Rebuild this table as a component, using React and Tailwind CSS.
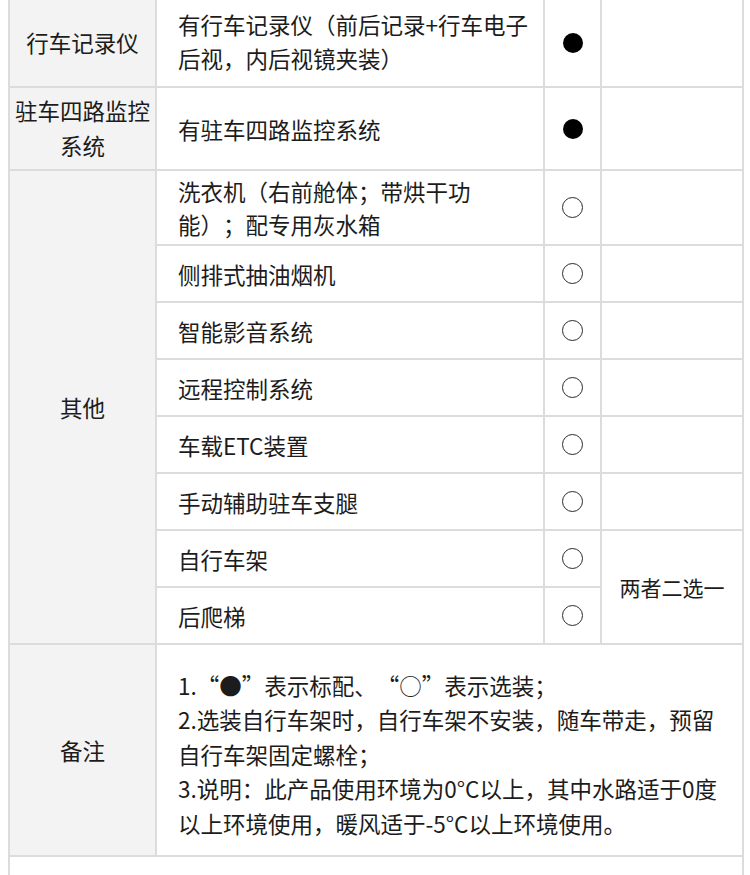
import React from "react";

const B = "border-2 border-[#dcdcdc]";
const C1 = `${B} bg-[#f3f3f3] text-center align-middle px-[4px]`;
const C2 = `${B} text-left align-middle pl-[21px] pr-[4px]`;
const C3 = `${B} text-center align-middle`;
const C4 = `${B} text-center align-middle`;

function Filled() {
  return <div className="mx-auto w-[20px] h-[20px] rounded-full bg-black" />;
}
function Hollow() {
  return <div className="mx-auto w-[21px] h-[21px] rounded-full border-[1.5px] border-[#2a2a2a] bg-white" />;
}

const others = [
  "侧排式抽油烟机",
  "智能影音系统",
  "远程控制系统",
  "车载ETC装置",
  "手动辅助驻车支腿",
];

export default function App() {
  return (
    <div className="w-[750px] h-[875px] overflow-hidden bg-white font-['Noto_Sans_CJK_SC','Noto_Sans',sans-serif] text-[22.5px] leading-[34px] text-[#1c1c1c] [text-spacing-trim:space-all]">
      <table className="ml-[8px] mt-[-2px] w-[734px] table-fixed border-collapse">
        <colgroup>
          <col className="w-[147px]" />
          <col className="w-[388px]" />
          <col className="w-[57px]" />
          <col className="w-[142px]" />
        </colgroup>
        <tbody>
          <tr className="h-[88px]">
            <td className={`${C1} pb-[2px]`}>行车记录仪</td>
            <td className={`${C2} pb-[4px]`}>
              <div className="whitespace-nowrap">有行车记录仪（前后记录+行车电子</div>
              <div className="whitespace-nowrap">后视，内后视镜夹装）</div>
            </td>
            <td className={C3}><Filled /></td>
            <td className={C4}></td>
          </tr>
          <tr className="h-[83px]">
            <td className={`${C1} leading-[35px] pb-[2px]`}>
              驻车四路监控
              <br />
              系统
            </td>
            <td className={C2}>有驻车四路监控系统</td>
            <td className={C3}><Filled /></td>
            <td className={C4}></td>
          </tr>
          <tr className="h-[75px]">
            <td className={C1} rowSpan={8}>其他</td>
            <td className={`${C2} leading-[33px]`}>
              <div className="whitespace-nowrap">洗衣机（右前舱体；带烘干功</div>
              <div className="whitespace-nowrap">能）；配专用灰水箱</div>
            </td>
            <td className={C3}><Hollow /></td>
            <td className={C4}></td>
          </tr>
          {others.map((t) => (
            <tr key={t} className="h-[57px]">
              <td className={C2}>{t}</td>
              <td className={C3}><Hollow /></td>
              <td className={C4}></td>
            </tr>
          ))}
          <tr className="h-[57px]">
            <td className={C2}>自行车架</td>
            <td className={C3}><Hollow /></td>
            <td className={`${C4} text-[21px]`} rowSpan={2}>两者二选一</td>
          </tr>
          <tr className="h-[57px]">
            <td className={C2}>后爬梯</td>
            <td className={C3}><Hollow /></td>
          </tr>
          <tr className="h-[212px]">
            <td className={C1}>备注</td>
            <td className={`${C2} pt-[8px] leading-[34.5px]`} colSpan={3}>
              <div className="whitespace-nowrap">1.“●”表示标配、“○”表示选装；</div>
              <div className="whitespace-nowrap">2.选装自行车架时，自行车架不安装，随车带走，预留</div>
              <div className="whitespace-nowrap">自行车架固定螺栓；</div>
              <div className="whitespace-nowrap">3.说明：此产品使用环境为0°C以上，其中水路适于0度</div>
              <div className="whitespace-nowrap">以上环境使用，暖风适于-5°C以上环境使用。</div>
            </td>
          </tr>
          <tr className="h-[60px]">
            <td className={`${B} bg-white`} colSpan={4}></td>
          </tr>
        </tbody>
      </table>
    </div>
  );
}
